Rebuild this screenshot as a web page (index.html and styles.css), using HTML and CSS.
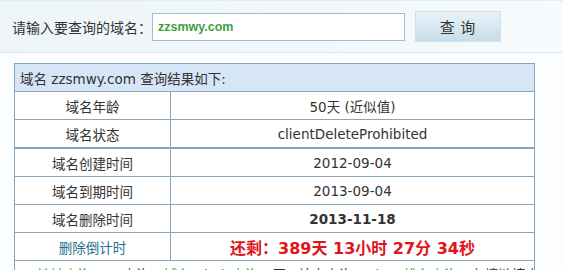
FILE: index.html
```html
<!DOCTYPE html>
<html lang="zh-CN">
<head>
<meta charset="utf-8">
<title>域名删除时间查询</title>
<link rel="stylesheet" href="styles.css">
</head>
<body>
<div class="search-bar">
  <label class="search-label" for="domain">请输入要查询的域名：</label>
  <div class="search-input" id="domain">zzsmwy.com</div>
  <button class="search-btn" type="button">查 询</button>
</div>
<div class="result">
  <table class="info">
    <colgroup><col class="c1"><col class="c2"></colgroup>
    <tr><td class="head" colspan="2">域名 zzsmwy.com 查询结果如下:</td></tr>
    <tr><td>域名年龄</td><td>50天 (近似值)</td></tr>
    <tr><td>域名状态</td><td>clientDeleteProhibited</td></tr>
  </table>
  <table class="info">
    <colgroup><col class="c1"><col class="c2"></colgroup>
    <tr><td>域名创建时间</td><td>2012-09-04</td></tr>
    <tr><td>域名到期时间</td><td>2013-09-04</td></tr>
    <tr><td>域名删除时间</td><td class="strong">2013-11-18</td></tr>
    <tr><td class="teal">删除倒计时</td><td class="countdown">还剩：389天 13小时 27分 34秒</td></tr>
    <tr><td class="links" colspan="2"><span class="g">IP地址查询</span><span class="b">PR查询</span><span class="g">域名Whois查询</span><span class="b">同IP站点查询</span><span class="g">Alexa排名查询</span><span class="b">友情链接查询</span></td></tr>
  </table>
</div>
</body>
</html>
```

FILE: styles.css
```css
html, body {
  margin: 0;
  padding: 0;
}
body {
  background: #fbfdfe;
  font-family: "DejaVu Sans", "Noto Sans CJK SC", sans-serif;
  font-size: 13.5px;
  color: #333;
  width: 563px;
  height: 270px;
  overflow: hidden;
}
.search-bar {
  height: 51px;
  display: flex;
  align-items: center;
  padding-left: 12px;
  border-top: 1px solid #e3ecf2;
  border-bottom: 1px solid #e1e9ee;
  background: linear-gradient(to right, #eef5f9 0%, #f1f7fa 60%, #f8fbfd 100%);
}
.search-label {
  flex: 0 0 138px;
  white-space: nowrap;
  font-size: 14px;
  color: #333;
  font-family: "Noto Sans CJK SC", sans-serif;
}
.search-input {
  flex: 0 0 auto;
  box-sizing: border-box;
  width: 253px;
  height: 28px;
  border: 1px solid #9cc3cc;
  background: #fff;
  font-family: "Liberation Sans", Arial, sans-serif;
  font-weight: bold;
  font-size: 12.5px;
  color: #3f9e3f;
  line-height: 26px;
  padding-left: 5px;
}
.search-btn {
  flex: 0 0 auto;
  box-sizing: border-box;
  margin-left: 10px;
  width: 86px;
  height: 31px;
  margin-top: -1px;
  border: 1px solid #cfe0ea;
  background: linear-gradient(to bottom, #eaf3f8 0%, #d7e8f1 50%, #c6dde9 100%);
  font-family: "Noto Sans CJK SC", sans-serif;
  font-size: 15px;
  color: #333;
  padding: 0;
  letter-spacing: 1px;
}
.result {
  padding: 10px 0 0 14px;
}
.info {
  border-collapse: collapse;
  width: 520px;
  table-layout: fixed;
}
.info col.c1 {
  width: 156px;
}
.info col.c2 {
  width: 364px;
}
.info td {
  border: 1px solid #87a6bb;
  height: 27px;
  padding: 0;
  background: #fff;
  text-align: center;
  white-space: nowrap;
  overflow: hidden;
}
.info td.head {
  background: #d6e6f6;
  text-align: left;
  padding-left: 5px;
}
.teal {
  color: #1f6f8e;
}
.strong {
  font-weight: bold;
}
.info td.countdown {
  color: #e0141c;
  font-weight: bold;
  font-size: 16px;
}
.info td.links {
  text-align: left;
  padding-left: 10px;
  vertical-align: top;
  padding-top: 3px;
}
.links span {
  margin-right: 14px;
}
.g {
  color: #2f8f2f;
}
.b {
  color: #333;
}
```
